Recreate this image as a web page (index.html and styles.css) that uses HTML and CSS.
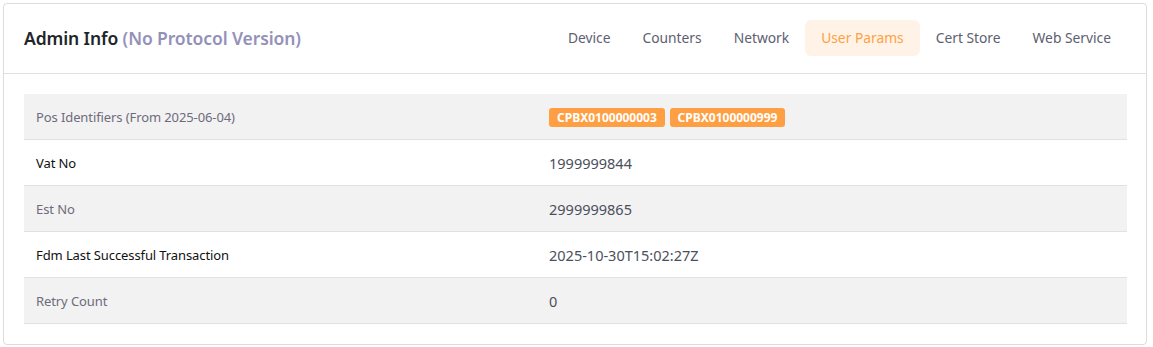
FILE: index.html
```html
<!DOCTYPE html>
<html lang="en">
<head>
  <meta charset="UTF-8" />
  <title>Admin Info</title>
  <link rel="stylesheet" href="styles.css">
</head>
<body>
  <div class="card">
    <div class="card-header">
      <h4 class="card-title">Admin Info <span class="muted">(No Protocol Version)</span></h4>
      <ul class="tabs">
        <li><a href="#">Device</a></li>
        <li><a href="#">Counters</a></li>
        <li><a href="#">Network</a></li>
        <li><a href="#" class="active">User Params</a></li>
        <li><a href="#">Cert Store</a></li>
        <li><a href="#">Web Service</a></li>
      </ul>
    </div>
    <div class="card-body">
      <table class="info-table">
        <tr class="odd">
          <td class="label">Pos Identifiers (From 2025-06-04)</td>
          <td class="value">
            <span class="badge">CPBX0100000003</span>
            <span class="badge">CPBX0100000999</span>
          </td>
        </tr>
        <tr>
          <td class="label">Vat No</td>
          <td class="value">1999999844</td>
        </tr>
        <tr class="odd">
          <td class="label">Est No</td>
          <td class="value">2999999865</td>
        </tr>
        <tr>
          <td class="label">Fdm Last Successful Transaction</td>
          <td class="value">2025-10-30T15:02:27Z</td>
        </tr>
        <tr class="odd">
          <td class="label">Retry Count</td>
          <td class="value">0</td>
        </tr>
      </table>
    </div>
  </div>
</body>
</html>
```

FILE: styles.css
```css
body {
  margin: 0;
  padding: 3px 6px 4px 3px;
  font-family: "Noto Sans", "Open Sans", sans-serif;
  background: #fff;
  color: #6e6b7b;
}

.card {
  border: 1px solid #dcdcdc;
  border-radius: 4px;
  background: #fff;
}

.card-header {
  display: flex;
  align-items: center;
  justify-content: space-between;
  padding: 16px 19px 17px 20px;
  border-bottom: 1px solid #e0e0e0;
}

.card-title {
  margin: 0;
  font-size: 17.5px;
  font-weight: 600;
  color: #212529;
  letter-spacing: -0.1px;
}

.card-title .muted {
  color: #9491b9;
}

.tabs {
  display: flex;
  list-style: none;
  margin: 0;
  padding: 0;
}

.tabs a {
  display: block;
  height: 36px;
  line-height: 36px;
  padding: 0 16px;
  font-size: 13.8px;
  color: #5d6070;
  text-decoration: none;
  border-radius: 6px;
}

.tabs a.active {
  background: #fff3e8;
  color: #ff9f43;
}

.card-body {
  padding: 20px 19px 20px 20px;
}

.info-table {
  width: 100%;
  border-collapse: collapse;
}

.info-table td {
  height: 45px;
  padding: 0 12px;
  border-bottom: 1px solid #dee2e6;
  vertical-align: middle;
}

.info-table tr.odd td {
  background: #f2f2f2;
}

.label {
  width: 489px;
  font-size: 13px;
  color: #111;
  letter-spacing: -0.1px;
}

tr.odd .label {
  color: #6e6b7b;
}

.value {
  font-size: 14.5px;
  color: #4b4f5c;
}

.badge {
  display: inline-block;
  background: #ff9f43;
  color: #fff;
  font-size: 12px;
  font-weight: 700;
  padding: 3px 8px;
  border-radius: 3px;
  line-height: 13px;
  margin-right: 1px;
}
```
